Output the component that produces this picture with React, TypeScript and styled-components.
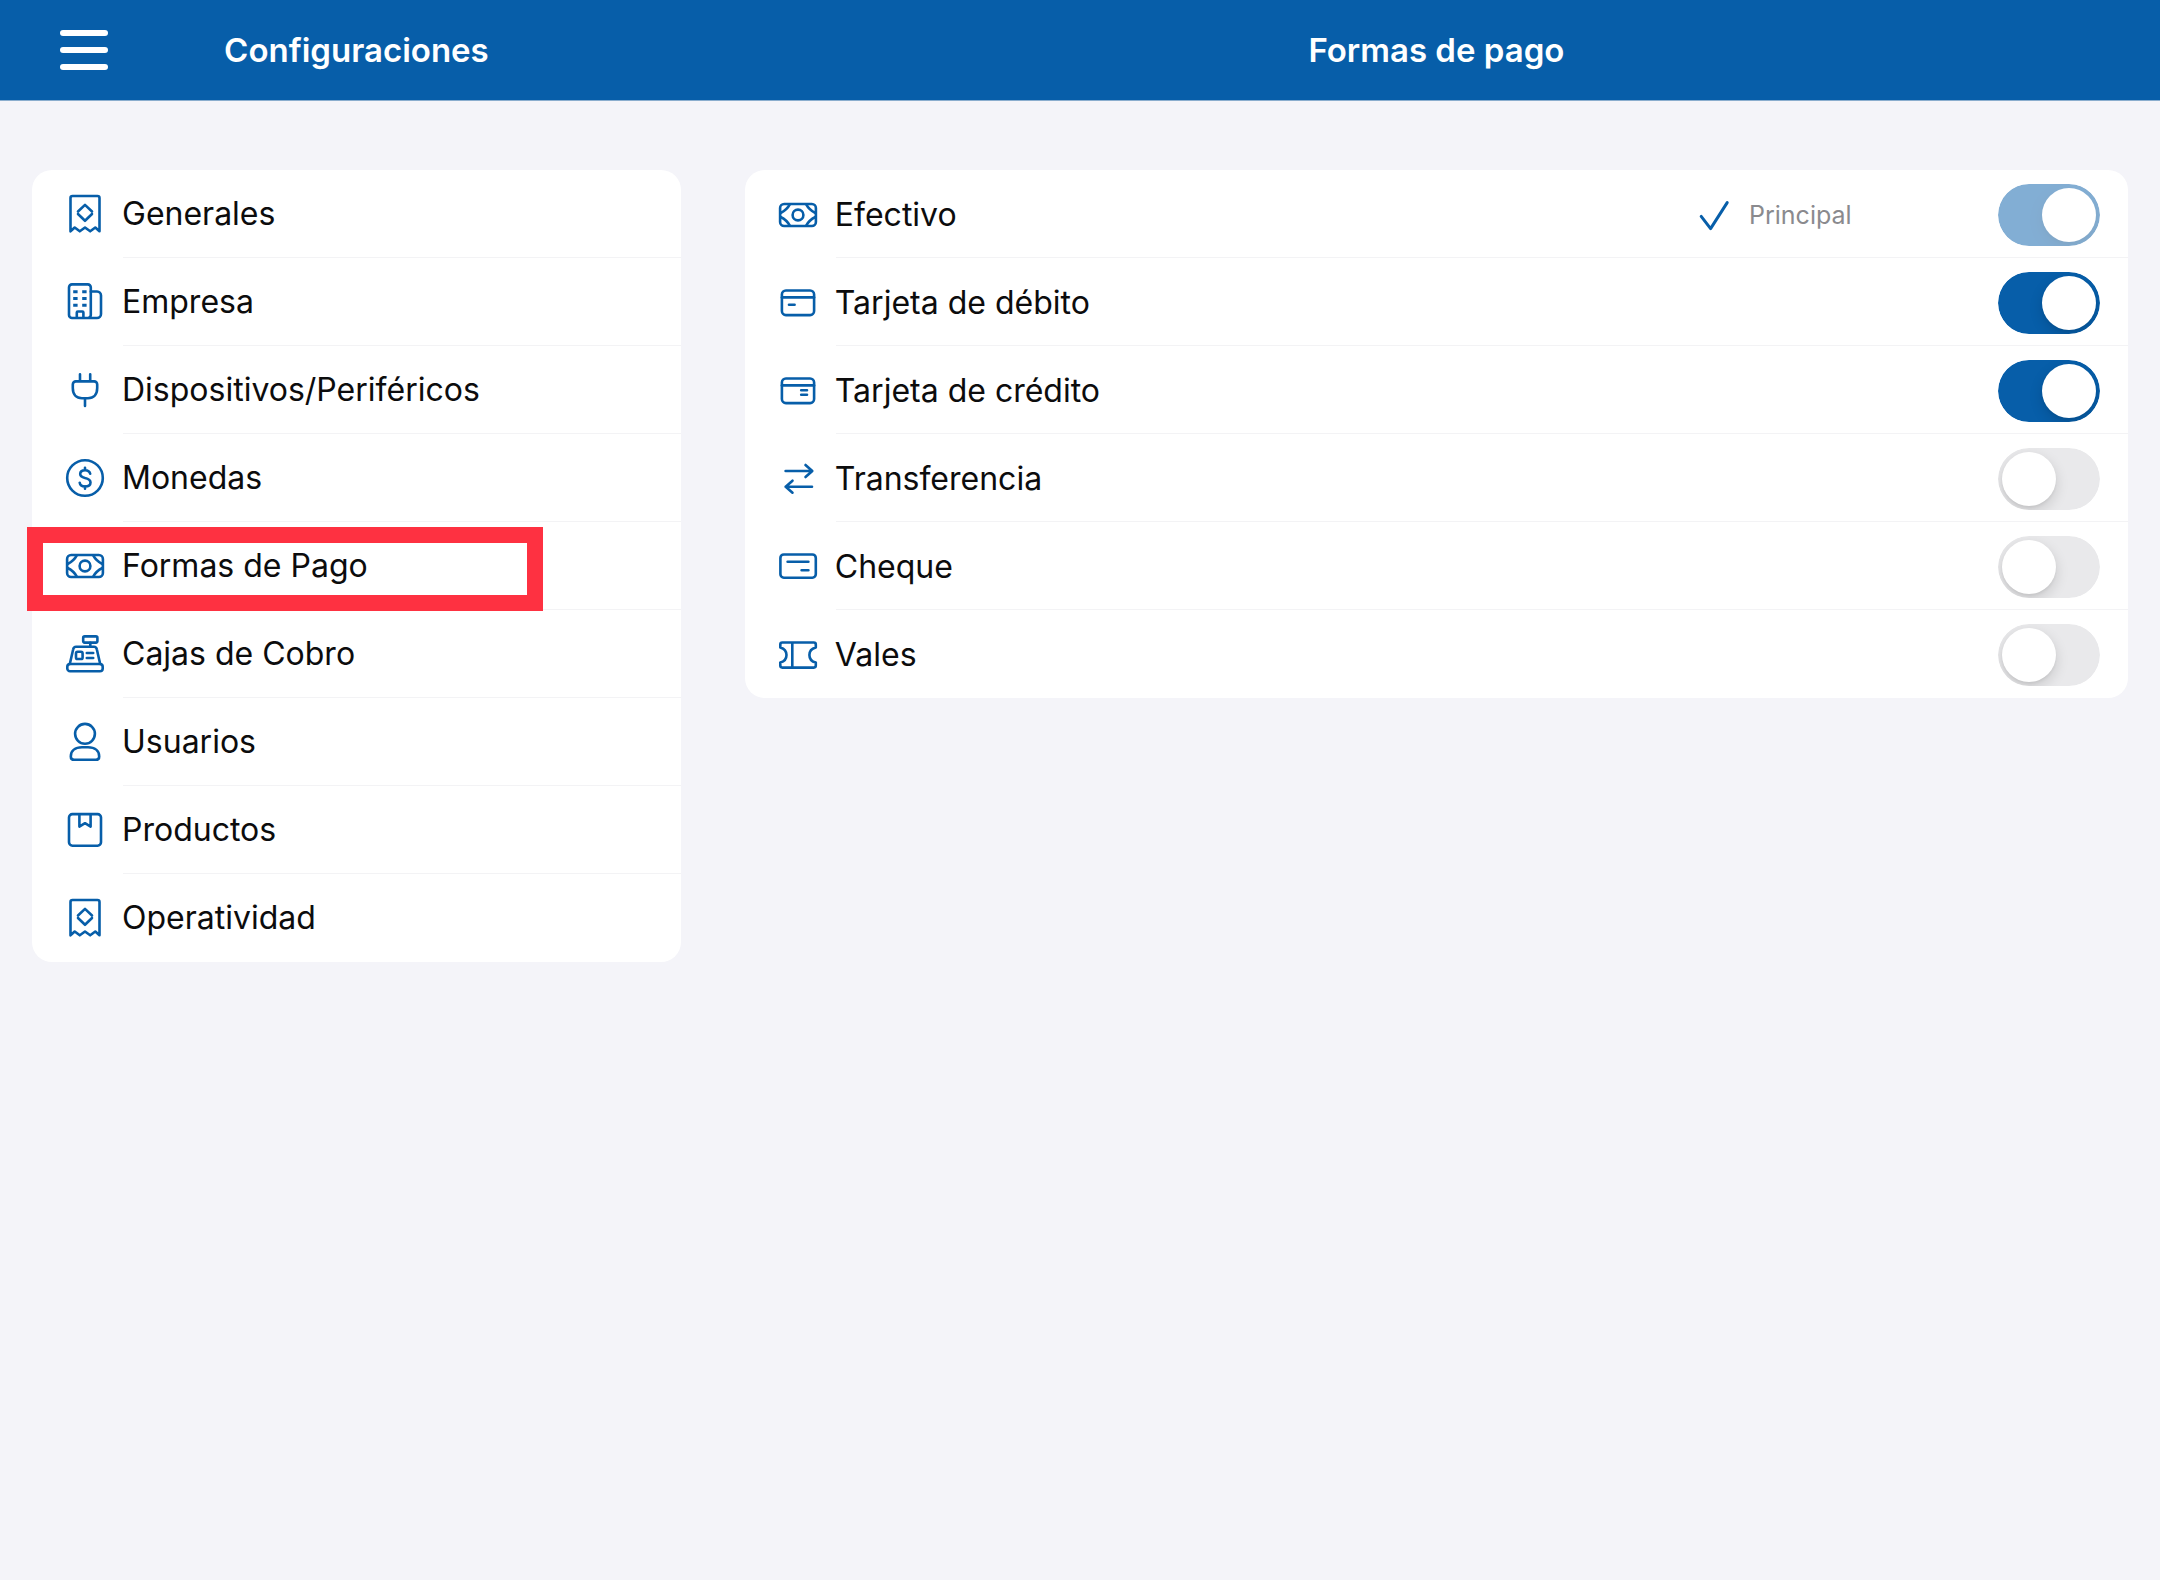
import React, { useState } from "react";
import styled, { createGlobalStyle } from "styled-components";

const BLUE = "#075ea9";

const GlobalStyle = createGlobalStyle`
  *, *::before, *::after { box-sizing: border-box; }
  body {
    margin: 0;
    background: #f4f4f9;
    color: #0c0c0d;
    font-family: Inter, "Liberation Sans", sans-serif;
  }
`;

const Page = styled.div`
  min-height: 100vh;
  background: #f4f4f9;
`;

const Header = styled.header`
  display: grid;
  grid-template-columns: 33fr 67fr;
  background: ${BLUE};
  border-bottom: 1px solid #8aadce;
`;

const TitleBar = styled.div`
  display: grid;
  grid-template-columns: 1fr auto 1fr;
  align-items: center;
  height: 100px;
  padding: 0 32px;
`;

const Title = styled.h1`
  grid-column: 2;
  margin: 0;
  color: #fff;
  font-size: 33px;
  font-weight: 600;
  line-height: 40px;
  white-space: nowrap;
`;

const MenuButton = styled.button`
  display: grid;
  justify-self: start;
  gap: 11px;
  width: 48px;
  margin-left: 28px;
  padding: 0;
  border: 0;
  background: none;
  cursor: pointer;
`;

const MenuBar = styled.span`
  height: 6px;
  border-radius: 3px;
  background: #fff;
`;

const Panes = styled.main`
  display: grid;
  grid-template-columns: 33fr 67fr;
  align-items: start;
`;

const Pane = styled.div`
  padding: 69px 32px;
`;

const Card = styled.ul`
  margin: 0;
  padding: 0;
  border-radius: 20px;
  background: #fff;
  list-style: none;
`;

const Item = styled.li`
  position: relative;

  &:not(:last-child) {
    background: linear-gradient(#f3f3f5, #f3f3f5) right bottom / calc(100% - 91px) 1px no-repeat;
  }
`;

const ItemLink = styled.a`
  display: flex;
  align-items: center;
  gap: 16px;
  height: 88px;
  padding: 0 32px;
  color: inherit;
  font-size: 32px;
  line-height: 42px;
  text-decoration: none;
`;

const MethodRow = styled.div`
  display: flex;
  align-items: center;
  height: 88px;
  padding: 2px 28px 0 32px;
`;

const MethodLabel = styled.label`
  display: flex;
  flex: 1;
  align-items: center;
  gap: 16px;
  font-size: 32px;
  line-height: 42px;
`;

const MainBadge = styled.span`
  display: flex;
  align-items: center;
  gap: 19px;
  width: 300px;
  color: #8a8a8e;
  font-size: 25px;
  line-height: 32px;
`;

const Switch = styled.input`
  flex: none;
  width: 102px;
  height: 62px;
  margin: 0;
  padding: 4px;
  appearance: none;
  border-radius: 31px;
  background: #e9e9eb;
  clip-path: inset(0 round 31px);
  cursor: pointer;

  &::before {
    content: "";
    display: block;
    width: 54px;
    height: 54px;
    border-radius: 50%;
    background: #fff;
    box-shadow: 0 5px 14px rgba(0, 0, 0, 0.14), 0 2px 3px rgba(0, 0, 0, 0.05);
  }

  &:checked { background: ${BLUE}; }
  &:checked::before { margin-left: 40px; }
  &:disabled { opacity: 0.5; cursor: default; }
`;

const Highlight = styled.span`
  position: absolute;
  inset: 5px 138px -1px -5px;
  z-index: 1;
  border: 16px solid #fe3141;
  pointer-events: none;
`;

const IconSvg = styled.svg`
  flex: none;
  width: 42px;
  height: 42px;
  fill: none;
  stroke: ${BLUE};
  stroke-width: 2.6;
  stroke-linecap: round;
  stroke-linejoin: round;
`;

const CheckSvg = styled(IconSvg)`
  width: 32px;
  height: 32px;
  stroke-width: 3;
`;

const banknote = (
  <>
    <rect x="3.1" y="10" width="35.8" height="22" rx="4" />
    <circle cx="21" cy="21" r="5.4" />
    <path d="M3.600 19C7.600 17 10.800 14.200 12.800 10.400M38.400 19C34.400 17 31.200 14.200 29.200 10.400M3.600 23C7.600 25 10.800 27.800 12.800 31.600M38.400 23C34.400 25 31.200 27.800 29.200 31.600" />
  </>
);

const receipt = (
  <>
    <path d="M6.5 38.3V5a2 2 0 0 1 2-2h25a2 2 0 0 1 2 2v33.3l-4.2-3.8-5.1 3.800-5.200-3.800-5.200 3.800-5.100-3.800z" />
    <path d="M14 18.500l7-6.600 7 6.600M14 21l7 6.800 7-6.800" />
  </>
);

const icons: Record<string, React.ReactNode> = {
  banknote,
  receipt,
  building: (
    <>
      <rect x="5" y="3.4" width="21.8" height="33.6" rx="3" />
      <path d="M26.8 10.5H33a4 4 0 0 1 4 4V33a4 4 0 0 1-4 4h-8M12.8 36.8v-5.3a1 1 0 0 1 1-1h4.6a1 1 0 0 1 1 1v5.3" />
      <path
        d="M9.2 10.7h4.4M18.2 10.7h4.4M9.2 17.4h4.4M18.2 17.4h4.4M9.2 24.3h4.4M18.2 24.3h4.4"
        strokeWidth="3"
        strokeLinecap="butt"
      />
    </>
  ),
  plug: (
    <path d="M16 5.2V12M26.2 5.2V12M11.8 12.4h18.4a3 3 0 0 1 3 3V19c0 6.600-3.600 10.200-9.200 10.200h-6c-5.600 0-9.200-3.600-9.200-10.200v-3.600a3 3 0 0 1 3-3zM21 29.400V37" />
  ),
  dollar: (
    <>
      <circle cx="21" cy="21" r="17.800" />
      <path d="M21 10.800v2.400M21 29.400v2.400M26.200 16.800C25.700 14.500 23.800 13.200 21.100 13.200C18.100 13.200 16.200 14.800 16.200 17C16.200 19.300 18 20.200 21 21C24.400 21.800 26.500 22.900 26.500 25.500C26.500 28 24.300 29.500 21 29.500C18 29.500 16 28.100 15.700 25.700" />
    </>
  ),
  register: (
    <>
      <rect x="19.200" y="3.400" width="14.200" height="6.200" rx="1.500" />
      <path d="M26.300 9.800V13.600M5.800 31l3.400-14.800a3 3 0 0 1 2.900-2.400h17.800a3 3 0 0 1 2.900 2.400L36.200 31" />
      <rect x="3.300" y="31" width="35.400" height="7.200" rx="2.800" />
      <rect x="12" y="18.800" width="6.600" height="7.200" rx="1.600" />
      <path d="M22.800 20h6.400M22.800 25h6.400" />
    </>
  ),
  user: (
    <>
      <circle cx="21" cy="12.800" r="9.900" />
      <path d="M18 26.200h6c6.800 0 11.200 3.600 11.200 9.200 0 2.200-1.200 3.400-3.400 3.400H10.200c-2.200 0-3.400-1.200-3.400-3.400 0-5.600 4.400-9.200 11.200-9.200z" />
    </>
  ),
  box: (
    <>
      <rect x="5" y="5.100" width="32" height="31.600" rx="3.400" />
      <path d="M15.400 5.400V17.600L21 14.200L26.600 17.600V5.400" />
    </>
  ),
  debit: (
    <>
      <rect x="4.900" y="8.500" width="32.200" height="24.600" rx="4" />
      <path d="M4.900 15.400h32.200" />
      <path d="M12 22.800h5.600" />
    </>
  ),
  credit: (
    <>
      <rect x="4.900" y="8.500" width="32.200" height="24.600" rx="4" />
      <path d="M4.900 15.400h32.200" />
      <path d="M24.200 20.200h5.800M24.200 24.700h5.800" />
    </>
  ),
  transfer: (
    <path d="M8.600 13H35M28.500 7l6.800 6-6.800 6M35 28.700H8.600M15.500 22.700l-6.800 6 6.800 6" />
  ),
  cheque: (
    <>
      <rect x="3.400" y="8.500" width="35.400" height="23.200" rx="3.400" />
      <path d="M10.600 15.700h20.800M24.600 24.300h6.800" />
    </>
  ),
  ticket: (
    <path d="M5.300 8.500H36.800a2 2 0 0 1 2 2V13.400C34.600 14.400 32.400 17.400 32.400 21S34.600 27.600 38.800 28.600V31.600a2 2 0 0 1-2 2H5.300a2 2 0 0 1-2-2V28.600C7.400 27.400 9.500 24.600 9.500 21S7.400 14.600 3.300 13.400V10.500a2 2 0 0 1 2-2zM15.300 8.500V33.600" />
  ),
};

const Icon = ({ name }: { name: string }) => (
  <IconSvg viewBox="0 0 42 42" aria-hidden="true">
    {icons[name]}
  </IconSvg>
);

const sections = [
  { id: "generales", label: "Generales", icon: "receipt" },
  { id: "empresa", label: "Empresa", icon: "building" },
  { id: "dispositivos", label: "Dispositivos/Periféricos", icon: "plug" },
  { id: "monedas", label: "Monedas", icon: "dollar" },
  { id: "formas-de-pago", label: "Formas de Pago", icon: "banknote", current: true },
  { id: "cajas", label: "Cajas de Cobro", icon: "register" },
  { id: "usuarios", label: "Usuarios", icon: "user" },
  { id: "productos", label: "Productos", icon: "box" },
  { id: "operatividad", label: "Operatividad", icon: "receipt" },
];

const methods = [
  { id: "efectivo", label: "Efectivo", icon: "banknote", on: true, main: true },
  { id: "debito", label: "Tarjeta de débito", icon: "debit", on: true },
  { id: "credito", label: "Tarjeta de crédito", icon: "credit", on: true },
  { id: "transferencia", label: "Transferencia", icon: "transfer", on: false },
  { id: "cheque", label: "Cheque", icon: "cheque", on: false },
  { id: "vales", label: "Vales", icon: "ticket", on: false },
];

export default function App() {
  const [enabled, setEnabled] = useState<Record<string, boolean>>(() =>
    Object.fromEntries(methods.map((m) => [m.id, m.on]))
  );

  return (
    <Page>
      <GlobalStyle />
      <Header>
        <TitleBar>
          <MenuButton type="button" aria-label="Menú">
            <MenuBar />
            <MenuBar />
            <MenuBar />
          </MenuButton>
          <Title>Configuraciones</Title>
        </TitleBar>
        <TitleBar>
          <Title as="h2">Formas de pago</Title>
        </TitleBar>
      </Header>
      <Panes>
        <Pane as="nav">
          <Card>
            {sections.map((s) => (
              <Item key={s.id}>
                <ItemLink href={`#${s.id}`} aria-current={s.current ? "page" : undefined}>
                  <Icon name={s.icon} />
                  {s.label}
                </ItemLink>
                {s.current && <Highlight />}
              </Item>
            ))}
          </Card>
        </Pane>
        <Pane as="section">
          <Card>
            {methods.map((m) => (
              <Item key={m.id}>
                <MethodRow>
                  <MethodLabel htmlFor={m.id}>
                    <Icon name={m.icon} />
                    {m.label}
                  </MethodLabel>
                  {m.main && (
                    <MainBadge>
                      <CheckSvg viewBox="0 0 32 32" aria-hidden="true">
                        <path d="M3.200 17.400L12.600 29.600L29.200 3.600" />
                      </CheckSvg>
                      Principal
                    </MainBadge>
                  )}
                  <Switch
                    id={m.id}
                    type="checkbox"
                    role="switch"
                    checked={enabled[m.id]}
                    disabled={m.main}
                    onChange={(e) => setEnabled({ ...enabled, [m.id]: e.target.checked })}
                  />
                </MethodRow>
              </Item>
            ))}
          </Card>
        </Pane>
      </Panes>
    </Page>
  );
}
